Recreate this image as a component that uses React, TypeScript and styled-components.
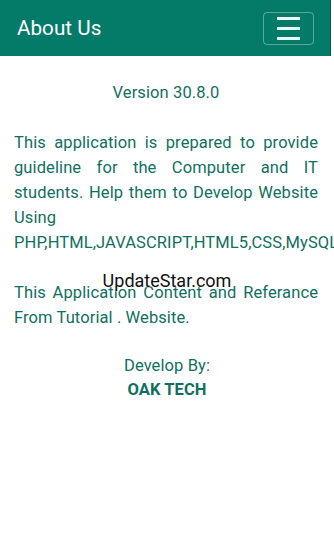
import React from "react";
import styled, { createGlobalStyle } from "styled-components";

const Global = createGlobalStyle`
  html, body { margin: 0; padding: 0; background: #ffffff; overflow: hidden; }
  body { font-family: Roboto, "Noto Sans", "Liberation Sans", sans-serif; }
`;

const Page = styled.div`
  width: 334px;
  min-height: 559px;
  position: relative;
  overflow: hidden;
  background: #ffffff;
`;

const Header = styled.header`
  height: 56px;
  width: 331px;
  box-sizing: border-box;
  background: #047b69;
  border-right: 1px solid #04584b;
  display: flex;
  align-items: center;
  justify-content: space-between;
  padding: 0 16px 0 17px;
`;

const Title = styled.h1`
  margin: 0;
  font-size: 20.7px;
  font-weight: 400;
  color: #ffffff;
`;

const MenuButton = styled.button`
  width: 51px;
  height: 33px;
  box-sizing: border-box;
  border: 1px solid rgba(255, 255, 255, 0.35);
  border-radius: 4px;
  background: transparent;
  display: flex;
  flex-direction: column;
  align-items: center;
  justify-content: center;
  gap: 7px;
  padding: 0;
`;

const MenuBar = styled.span`
  display: block;
  width: 23px;
  height: 3px;
  background: #e8fbf7;
`;

const Content = styled.main`
  padding: 24px 16px 0 14px;
  color: #107060;
  font-size: 16.5px;
  letter-spacing: 0.1px;
  line-height: 25px;
`;

const Centered = styled.p<{ $bold?: boolean }>`
  margin: 0;
  text-align: center;
  font-weight: ${(p) => (p.$bold ? 700 : 400)};
`;

const Paragraph = styled.p`
  margin: 25px 0 0;
  text-align: justify;
`;

const Credits = styled.div`
  margin-top: 24px;
  padding-left: 2px;
  line-height: 24px;
`;

const Watermark = styled.div`
  position: absolute;
  left: 0;
  right: 0;
  top: 270px;
  text-align: center;
  font-family: Roboto, "Liberation Sans", sans-serif;
  font-size: 18px;
  color: #111111;
  text-shadow: 0 0 2px #ffffff, 0 0 2px #ffffff;
  pointer-events: none;
`;

export default function App() {
  return (
    <Page>
      <Global />
      <Header>
        <Title>About Us</Title>
        <MenuButton aria-label="Menu">
          <MenuBar />
          <MenuBar />
          <MenuBar />
        </MenuButton>
      </Header>
      <Content>
        <Centered>Version 30.8.0</Centered>
        <Paragraph>
          This application is prepared to provide guideline for the Computer and IT
          students. Help them to Develop Website Using
          PHP,HTML,JAVASCRIPT,HTML5,CSS,MySQL
        </Paragraph>
        <Paragraph>This Application Content and Referance From Tutorial . Website.</Paragraph>
        <Credits>
          <Centered>Develop By:</Centered>
          <Centered $bold>OAK TECH</Centered>
        </Credits>
      </Content>
      <Watermark>UpdateStar.com</Watermark>
    </Page>
  );
}
